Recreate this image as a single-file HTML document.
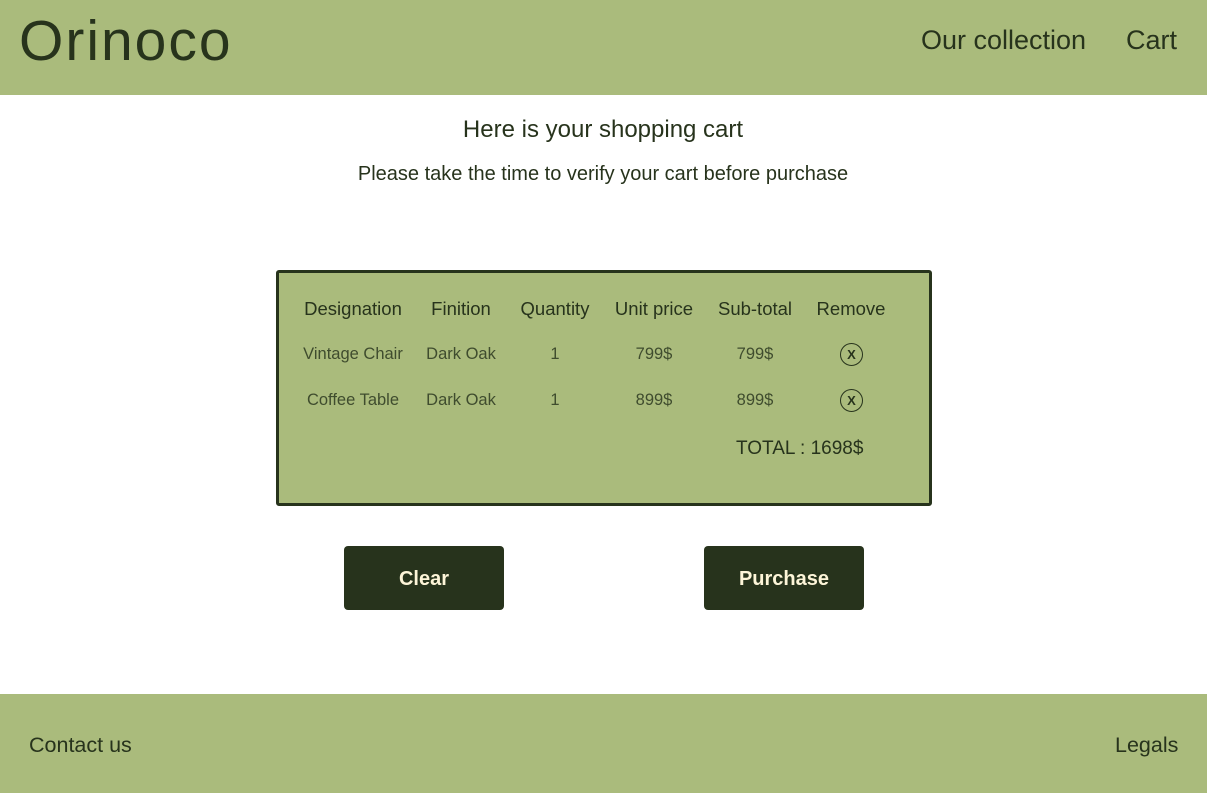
<!DOCTYPE html>
<html><head><meta charset="utf-8"><style>
*{margin:0;padding:0;box-sizing:border-box}
body{width:1207px;height:793px;position:relative;background:#fff;font-family:"Liberation Sans",sans-serif;color:#27331c;overflow:hidden}
.hdr{position:absolute;left:0;top:0;width:1207px;height:95px;background:#aabb7c}
.ftr{position:absolute;left:0;top:694px;width:1207px;height:99px;background:#aabb7c}
.t{position:absolute;white-space:nowrap;line-height:1}
.c{transform:translateX(-50%)}
.box{position:absolute;left:276px;top:270px;width:656px;height:236px;background:#aabb7c;border:3px solid #27331c;border-radius:3px}
.btn{position:absolute;top:546px;width:160px;height:64px;background:#27331c;border-radius:4px;color:#fdf5d8;font-size:20px;font-weight:bold;text-align:center;line-height:67px}
.x{position:absolute;width:23px;height:23px;border:1.3px solid #27331c;border-radius:50%;font-size:13px;text-align:center;line-height:21px;font-weight:bold}
.h{font-size:18.5px}
.r{font-size:16.5px;color:#3f4c2e}
</style></head><body>
<div class="hdr"></div>
<div class="t" style="left:19px;top:13px;font-size:57px;letter-spacing:2px">Orinoco</div>
<div class="t" style="left:921px;top:27px;font-size:27px">Our collection</div>
<div class="t" style="left:1126px;top:27px;font-size:27px">Cart</div>
<div class="t c" style="left:603px;top:118px;font-size:24px">Here is your shopping cart</div>
<div class="t c" style="left:603px;top:164px;font-size:20px">Please take the time to verify your cart before purchase</div>
<div class="box"></div>
<div class="t c h" style="left:353px;top:300px">Designation</div>
<div class="t c h" style="left:461px;top:300px">Finition</div>
<div class="t c h" style="left:555px;top:300px">Quantity</div>
<div class="t c h" style="left:654px;top:300px">Unit price</div>
<div class="t c h" style="left:755px;top:300px">Sub-total</div>
<div class="t c h" style="left:851px;top:300px">Remove</div>
<div class="t c r" style="left:353px;top:346px">Vintage Chair</div>
<div class="t c r" style="left:461px;top:346px">Dark Oak</div>
<div class="t c r" style="left:555px;top:346px">1</div>
<div class="t c r" style="left:654px;top:346px">799$</div>
<div class="t c r" style="left:755px;top:346px">799$</div>
<div class="x" style="left:840px;top:343px">X</div>
<div class="t c r" style="left:353px;top:392px">Coffee Table</div>
<div class="t c r" style="left:461px;top:392px">Dark Oak</div>
<div class="t c r" style="left:555px;top:392px">1</div>
<div class="t c r" style="left:654px;top:392px">899$</div>
<div class="t c r" style="left:755px;top:392px">899$</div>
<div class="x" style="left:840px;top:389px">X</div>
<div class="t" style="left:736px;top:439px;font-size:19px">TOTAL : 1698$</div>
<div class="btn" style="left:344px">Clear</div>
<div class="btn" style="left:704px">Purchase</div>
<div class="ftr"></div>
<div class="t" style="left:29px;top:735px;font-size:21.5px">Contact us</div>
<div class="t" style="left:1115px;top:735px;font-size:21.5px">Legals</div>
</body></html>
